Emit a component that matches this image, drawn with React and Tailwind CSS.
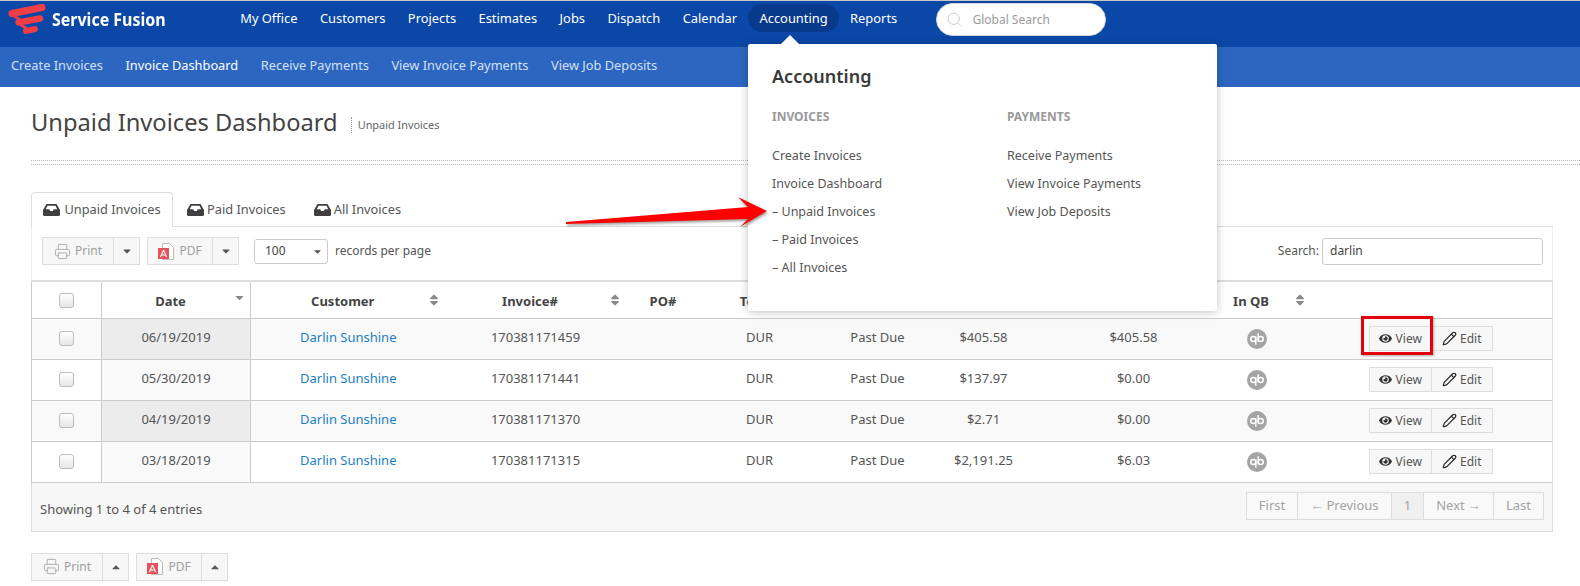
import React from "react";
import { Printer, Search, Pencil } from "lucide-react";
import { FaEye, FaCaretDown, FaCaretUp, FaSort } from "react-icons/fa";

const nav = ["My Office", "Customers", "Projects", "Estimates", "Jobs", "Dispatch", "Calendar", "Accounting", "Reports"];
const sub = ["Create Invoices", "Invoice Dashboard", "Receive Payments", "View Invoice Payments", "View Job Deposits"];
const rows = [
  { date: "06/19/2019", inv: "170381171459", total: "$405.58", bal: "$405.58" },
  { date: "05/30/2019", inv: "170381171441", total: "$137.97", bal: "$0.00" },
  { date: "04/19/2019", inv: "170381171370", total: "$2.71", bal: "$0.00" },
  { date: "03/18/2019", inv: "170381171315", total: "$2,191.25", bal: "$6.03" },
];

function Logo() {
  return (
    <svg width="40" height="32" viewBox="0 0 40 32" className="shrink-0">
      <g fill="none" stroke="#ef3e46" strokeLinecap="round">
        <path d="M4 9.500 L34 3.500" strokeWidth="7" />
        <path d="M4 9.500 C6 12 8 14 11 15" strokeWidth="3" />
        <path d="M10.500 18.500 L32 14.500" strokeWidth="6.500" />
        <path d="M11 18.500 C13 21 15 23 18 24" strokeWidth="3" />
        <path d="M18 27 L27 25" strokeWidth="6" />
      </g>
    </svg>
  );
}

function Tray() {
  return (
    <svg width="17" height="12" viewBox="0 0 17 12" className="shrink-0">
      <path fill="#3f3f3f" d="M3.500 0h10L17 6v4.500a1.500 1.500 0 0 1-1.500 1.500h-14A1.500 1.500 0 0 1 0 10.500V6zM4.500 1.800 2.800 5.200h3.400l1 1.800h2.600l1-1.800h3.400l-1.700-3.400z" fillRule="evenodd" />
    </svg>
  );
}

function PdfIcon() {
  return (
    <svg width="17" height="17" viewBox="0 0 17 17" className="shrink-0">
      <path d="M4.500.5h7l4 4v12h-11z" fill="#fff" stroke="#bbb" />
      <rect x="0" y="5" width="11" height="11" fill="#e2545a" />
      <path d="M5.500 7 L2.500 14 M5.500 7 L8.500 14 M3.500 12h4" stroke="#fff" strokeWidth="1.100" fill="none" />
    </svg>
  );
}

function Qb() {
  return (
    <svg width="20" height="20" viewBox="0 0 20 20" className="mx-auto block">
      <circle cx="10" cy="10" r="10" fill="#a4a4a4" />
      <g fill="none" stroke="#fff" strokeWidth="1.500">
        <circle cx="6.300" cy="10" r="2.500" />
        <path d="M8.800 7.500V15.800" />
        <circle cx="13.700" cy="10" r="2.500" />
        <path d="M11.200 12.500V4.200" />
      </g>
    </svg>
  );
}

function Check() {
  return <span className="mx-auto block h-[15px] w-[15px] rounded-[3px] border border-[#bdbdbd] bg-gradient-to-b from-[#fff] to-[#e6e6e6]" />;
}

function SplitBtn({ icon, label, w1, w2, up }) {
  return (
    <div className="flex h-[28px] border border-[#ddd] bg-[#f7f7f7] text-[12px] text-[#a0a0a0]">
      <div className={`${w1} flex items-center justify-center gap-1 border-r border-[#ddd]`}>
        {icon}
        <span>{label}</span>
      </div>
      <div className={`${w2} flex items-center justify-center text-[#555]`}>
        {up ? <FaCaretUp size={12} /> : <FaCaretDown size={12} />}
      </div>
    </div>
  );
}

function Th({ children, cls = "", sort, off = "right-[10px]" }) {
  return (
    <th className={`relative pr-[11px] pt-[3px] text-center text-[13px] font-bold text-[#444] ${cls}`}>
      {children}
      {sort === "down" && (
        <span className={`absolute top-[9px] ${off} text-[#8a8a8a]`}><FaCaretDown size={13} /></span>
      )}
      {sort === "both" && (
        <span className={`absolute top-[11px] ${off} text-[#8a8a8a]`}><FaSort size={14} /></span>
      )}
    </th>
  );
}

function Arrow({ children }) {
  return <span className="font-['Liberation_Sans',sans-serif]">{children}</span>;
}

export default function App() {
  return (
    <div className="relative h-[586px] w-full overflow-hidden bg-white font-['Open_Sans',sans-serif] text-[13px] text-[#555]">
      <header className="flex h-[47px] items-start border-t border-[#c9c9c9] bg-[#0a47a6] text-white">
        <div className="flex w-[229px] items-center pl-[8px] pt-[3px]">
          <Logo />
          <span className="ml-[4px] origin-left scale-x-[0.94] whitespace-nowrap text-[17px] font-bold leading-[30px]">Service Fusion</span>
        </div>
        <nav className="flex pt-[3px] text-[12.9px]">
          {nav.map((n) => (
            <a key={n} className={`h-[28px] whitespace-nowrap rounded-full px-[11.2px] leading-[28px] ${n === "Accounting" ? "bg-[#083a8c]" : ""}`}>{n}</a>
          ))}
        </nav>
        <div className="ml-[28px] mt-[2px] flex h-[33px] w-[170px] items-center rounded-full border border-[#d5d5d5] bg-white pl-[9px] text-[12px] text-[#9a9a9a]">
          <Search size={17} strokeWidth={1.300} className="text-[#c8c8c8]" />
          <span className="ml-[9px]">Global Search</span>
        </div>
      </header>

      <div className="flex h-[40px] items-center gap-[22.5px] bg-[#2d66c0] pb-[2px] pl-[11px] text-[12.8px] text-[#d3e0f4]">
        {sub.map((s) => (
          <a key={s} className={s === "Invoice Dashboard" ? "text-white" : ""}>{s}</a>
        ))}
      </div>

      <main className="pl-[31px] pr-[27px]">
        <div className="mt-[20px] flex h-[30px] items-center">
          <h1 className="text-[23.7px] font-normal leading-[30px] text-[#444]">Unpaid Invoices Dashboard</h1>
          <span className="ml-[13px] mt-[5px] border-l border-dotted border-[#999] pl-[6px] text-[10.9px] leading-[16px] text-[#666]">Unpaid Invoices</span>
        </div>
        <div className="-mr-[27px] mt-[23px] h-[5px] border-y border-dotted border-[#bbb]" />

        <div className="mt-[27px] flex h-[35px] items-stretch border-b border-[#ddd] text-[12.8px] text-[#555]">
          <div className="-mb-px flex w-[142px] items-center justify-center gap-[4px] rounded-t-[4px] border border-b-0 border-[#ddd] bg-white">
            <Tray />
            <span>Unpaid Invoices</span>
          </div>
          <div className="ml-[14px] flex items-center gap-[3px] pt-[1px]"><Tray /><span>Paid Invoices</span></div>
          <div className="ml-[28px] flex items-center gap-[3px] pt-[1px]"><Tray /><span>All Invoices</span></div>
        </div>

        <div className="flex h-[53px] items-center border-x border-[#eee] pb-[5px] pl-[10px] pr-[9px]">
          <SplitBtn icon={<Printer size={17} strokeWidth={1.300} className="text-[#aaa]" />} label="Print" w1="w-[71px]" w2="w-[25px]" />
          <div className="ml-[7px]">
            <SplitBtn icon={<PdfIcon />} label="PDF" w1="w-[65px]" w2="w-[25px]" />
          </div>
          <div className="ml-[15px] flex h-[25px] w-[74px] items-center justify-between rounded-[3px] border border-[#ccc] bg-white pl-[10px] pr-[4px] text-[12px] text-[#444]">
            <span>100</span>
            <FaCaretDown size={11} className="text-[#555]" />
          </div>
          <span className="ml-[7px] text-[12px] text-[#555]">records per page</span>
          <div className="ml-auto flex items-center gap-[3px] text-[12px]">
            <span>Search:</span>
            <div className="flex h-[27px] w-[221px] items-center rounded-[3px] border border-[#ccc] bg-white px-[7px] text-[12px] text-[#444]">darlin</div>
          </div>
        </div>

        <table className="w-full table-fixed border-collapse border-t-2 border-[#ddd]">
          <colgroup>
            <col className="w-[70px]" />
            <col className="w-[149px]" />
            <col className="w-[195px]" />
            <col className="w-[180px]" />
            <col className="w-[75px]" />
            <col className="w-[118px]" />
            <col className="w-[118px]" />
            <col className="w-[94px]" />
            <col className="w-[166px]" />
            <col className="w-[120px]" />
            <col />
          </colgroup>
          <thead>
            <tr className="h-[37px] border-b border-[#ccc]">
              <th className="border-l border-[#ccc] pt-[2px]"><Check /></th>
              <Th cls="border-x border-[#ccc]" sort="down" off="right-[4px]">Date</Th>
              <Th sort="both" off="right-[5px]">Customer</Th>
              <Th sort="both" off="right-[4px]">Invoice#</Th>
              <th className="pt-[3px] font-bold text-[#444]">PO#</th>
              <th className="pt-[3px] font-bold text-[#444]">Terms</th>
              <th className="pt-[3px] font-bold text-[#444]">Status</th>
              <th className="pt-[3px] font-bold text-[#444]">Total</th>
              <th className="pl-[40px] pt-[3px] font-bold text-[#444]">Balance</th>
              <Th sort="both" off="right-[10px]">In QB</Th>
              <th className="border-r border-[#ddd]" />
            </tr>
          </thead>
          <tbody>
            {rows.map((r, i) => (
              <tr key={r.inv} className={`h-[41px] border-b border-[#ccc] text-center ${i % 2 === 0 ? "bg-[#f9f9f9]" : "bg-white"}`}>
                <td className="border-l border-[#ccc]"><Check /></td>
                <td className={`border-x border-[#ccc] pb-[2px] ${i % 2 === 0 ? "bg-[#ececec]" : "bg-[#f9f9f9]"}`}>{r.date}</td>
                <td className="pb-[2px] text-[#1b7fc4]">Darlin Sunshine</td>
                <td className="pb-[2px]">{r.inv}</td>
                <td />
                <td className="pb-[2px]">DUR</td>
                <td className="pb-[2px]">Past Due</td>
                <td className="pb-[2px]">{r.total}</td>
                <td className="pb-[2px] pl-[40px]">{r.bal}</td>
                <td><Qb /></td>
                <td className="border-r border-[#ddd] pr-[7px]">
                  <div className="relative inline-flex h-[25px] border border-[#ddd] bg-[#f7f7f7] align-middle text-[12px] text-[#555]">
                    <span className="flex w-[62px] items-center justify-center gap-[4px] border-r border-[#ddd]">
                      <FaEye size={13} className="text-[#333]" />View
                    </span>
                    <span className="flex w-[60px] items-center justify-center gap-[3px]">
                      <Pencil size={15} strokeWidth={1.800} className="text-[#222]" />Edit
                    </span>
                    {i === 0 && <span className="absolute -left-[9px] -top-[11px] h-[39px] w-[72px] border-[3px] border-[#e5000e] shadow-[1px_1px_2px_rgba(0,0,0,0.3)]" />}
                  </div>
                </td>
              </tr>
            ))}
          </tbody>
        </table>

        <div className="flex h-[49px] items-start justify-between border border-t-0 border-[#ddd] bg-[#f7f7f7] pl-[8px] pr-[8px]">
          <span className="mt-[17px] leading-[18px] text-[#555]">Showing 1 to 4 of 4 entries</span>
          <div className="mt-[9px] flex h-[28px] border border-[#ddd] bg-[#f9f9f9] text-[#a3a3a3]">
            <span className="flex w-[51px] items-center justify-center border-r border-[#ddd]">First</span>
            <span className="flex w-[94px] items-center justify-center gap-[3px] border-r border-[#ddd]"><Arrow>←</Arrow>Previous</span>
            <span className="flex w-[32px] items-center justify-center border-r border-[#ddd] bg-[#f0f0f0]">1</span>
            <span className="flex w-[70px] items-center justify-center gap-[3px] border-r border-[#ddd]">Next<Arrow>→</Arrow></span>
            <span className="flex w-[49px] items-center justify-center">Last</span>
          </div>
        </div>

        <div className="mt-[21px] flex gap-[7px]">
          <SplitBtn up icon={<Printer size={17} strokeWidth={1.300} className="text-[#aaa]" />} label="Print" w1="w-[71px]" w2="w-[25px]" />
          <SplitBtn up icon={<PdfIcon />} label="PDF" w1="w-[65px]" w2="w-[25px]" />
        </div>
      </main>

      <div className="absolute left-[748px] top-[44px] h-[267px] w-[469px] rounded-[2px] bg-white px-[24px] pt-[21px] text-[12.5px] text-[#555] shadow-[0_1px_8px_rgba(0,0,0,0.25)]">
        <span className="absolute -top-[9px] left-[33px] h-0 w-0 border-x-[9px] border-b-[9px] border-x-transparent border-b-white" />
        <h2 className="text-[18px] font-semibold leading-[22px] text-[#3a3a3a]">Accounting</h2>
        <div className="mt-[21px] grid grid-cols-[235px_1fr]">
          <div>
            <div className="text-[12px] font-bold leading-[18px] text-[#999]">INVOICES</div>
            <ul className="mt-[16px] leading-[28px]">
              <li>Create Invoices</li>
              <li>Invoice Dashboard</li>
              <li>– Unpaid Invoices</li>
              <li>– Paid Invoices</li>
              <li>– All Invoices</li>
            </ul>
          </div>
          <div>
            <div className="text-[12px] font-bold leading-[18px] text-[#999]">PAYMENTS</div>
            <ul className="mt-[16px] leading-[28px]">
              <li>Receive Payments</li>
              <li>View Invoice Payments</li>
              <li>View Job Deposits</li>
            </ul>
          </div>
        </div>
      </div>

      <svg width="215" height="45" viewBox="0 0 215 45" className="absolute left-[560px] top-[190px] drop-shadow-[1px_2px_1px_rgba(0,0,0,0.35)]">
        <polygon points="6,32 188,17 178,7 207,21 180,37 188,29 6,34" fill="#ff0000" />
      </svg>
    </div>
  );
}
